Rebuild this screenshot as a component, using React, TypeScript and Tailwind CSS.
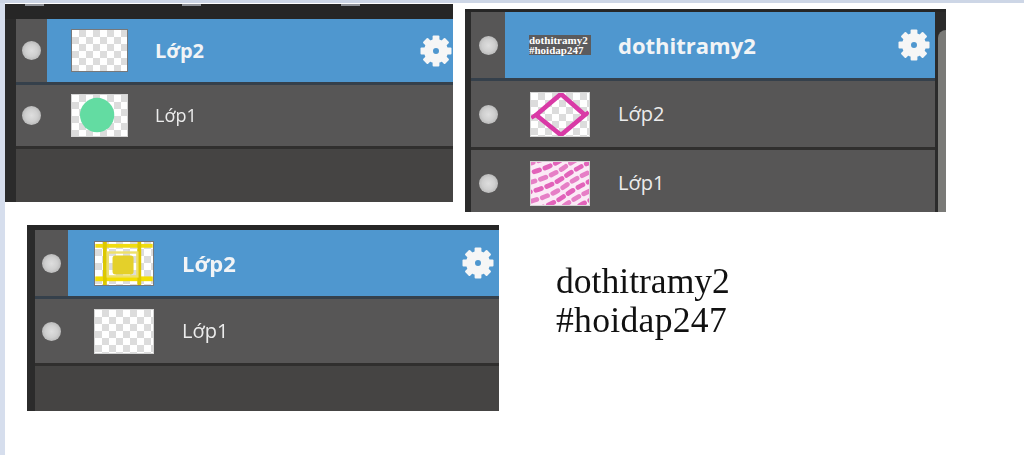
import React from "react";

// small checker used as the transparent layer preview
const checker =
  "bg-white bg-[linear-gradient(45deg,#dcdcdc_25%,transparent_25%,transparent_75%,#dcdcdc_75%),linear-gradient(45deg,#dcdcdc_25%,transparent_25%,transparent_75%,#dcdcdc_75%)] bg-[length:14px_14px] bg-[position:0_0,7px_7px]";

function Gear({ className }: { className: string }) {
  const teeth = [0, 45, 90, 135, 180, 225, 270, 315];
  return (
    <svg viewBox="0 0 32 32" className={className}>
      {teeth.map((a) => (
        <rect key={a} x="12.6" y="0.5" width="6.8" height="9" rx="1" fill="currentColor" transform={`rotate(${a} 16 16)`} />
      ))}
      <circle cx="16" cy="16" r="7.5" fill="none" stroke="currentColor" strokeWidth="9" />
    </svg>
  );
}

function Dot() {
  return (
    <div className="w-[19px] h-[19px] rounded-full bg-[radial-gradient(circle,#dedede_0%,#cfcfcf_45%,#a4a4a4_100%)]" />
  );
}

function Thumb({ size, dark, plain, children }: { size: string; dark?: boolean; plain?: boolean; children?: React.ReactNode }) {
  return (
    <div className={`${size} overflow-hidden border ${dark ? "border-[#77787a]" : "border-[#d4d4d4]"} ${plain ? "" : checker}`}>
      {children}
    </div>
  );
}

function Row({
  label,
  thumb,
  active,
  h,
  dotW,
  thumbX,
  labelX,
  labelSize,
  gearR,
}: {
  label: string;
  thumb: React.ReactNode;
  active?: boolean;
  h: string;
  dotW: string;
  thumbX: string;
  labelX: string;
  labelSize: string;
  gearR?: string;
}) {
  return (
    <div className={`flex items-stretch ${h} border-b-[3px] ${active ? "border-[#35404b]" : "border-[#302f2e]"} bg-[#575656]`}>
      <div className={`${dotW} shrink-0 flex items-center justify-center`}>
        <Dot />
      </div>
      <div className={`flex-1 min-w-0 flex items-center ${active ? "bg-[#4f97cf]" : ""}`}>
        <div className={`${thumbX} shrink-0`}>{thumb}</div>
        <span
          className={`${labelX} ${labelSize} font-['Open_Sans',sans-serif] whitespace-nowrap ${active ? "font-bold text-[#f2f4f6]" : "text-[#ececec]"}`}
        >
          {label}
        </span>
        {active && <Gear className={`ml-auto ${gearR} w-[32px] h-[32px] text-[#f6f6f6]`} />}
      </div>
    </div>
  );
}

function GreenCircle() {
  return (
    <svg viewBox="0 0 57 43" className="w-full h-full">
      <circle cx="26" cy="21" r="18" fill="#63dca2" />
    </svg>
  );
}

function Diamond() {
  return (
    <svg viewBox="0 0 60 45" className="w-full h-full">
      <path d="M5 23 L31 1 L56 23 L31 44 Z" fill="none" stroke="#d93aa6" strokeWidth="4.8" />
      <path d="M0 26 L5 23 M56 23 L60 20" stroke="#d93aa6" strokeWidth="4" />
    </svg>
  );
}

function PinkMottle() {
  const bands = [-12, -2, 8, 18, 28, 38, 48, 58];
  return (
    <svg viewBox="0 0 60 45" className="w-full h-full bg-[#fbeaf6]">
      {bands.map((y, i) => (
        <path
          key={y}
          d={`M-4 ${y + 14} Q20 ${y + 8} 34 ${y - 2} T66 ${y - 20}`}
          fill="none"
          stroke={i % 2 ? "#e263ba" : "#e67fc6"}
          strokeWidth="5"
          strokeLinecap="round"
          strokeDasharray="6 6"
          strokeDashoffset={i * 5}
        />
      ))}
    </svg>
  );
}

function TextThumb() {
  return (
    <div className="w-full h-full flex flex-col justify-center bg-[#5b5b5d] font-['Liberation_Serif',serif] font-bold text-[11px] leading-[10px] text-white whitespace-nowrap">
      <span>dothitramy2</span>
      <span>#hoidap247</span>
    </div>
  );
}

function YellowLines() {
  return (
    <svg viewBox="0 0 60 45" className="w-full h-full">
      <rect x="0" y="2" width="60" height="4" fill="#f0dc10" />
      <rect x="0" y="36" width="60" height="5" fill="#f3de00" />
      <rect x="8" y="0" width="4" height="45" fill="#dcc800" />
      <rect x="44" y="0" width="4" height="45" fill="#dcc800" />
      <rect x="13" y="11" width="31" height="25" fill="none" stroke="#eee06a" strokeWidth="2.5" />
      <rect x="18" y="14" width="22" height="20" rx="3" fill="#e4d02a" />
    </svg>
  );
}

export default function App() {
  return (
    <div className="w-[1024px] h-[455px] overflow-hidden bg-white">
      <div className="h-[3px] bg-[#cdd6e6]" />
      <div className="flex h-[452px]">
        <div className="w-[5px] h-full shrink-0 bg-[#d6deed]" />
        <div className="flex-1 min-w-0 pt-px blur-[0.4px]">
          <div className="flex items-start">
            {/* panel one */}
            <div className="relative w-[448px] h-[198px] bg-[#454443] flex flex-col">
              <div className="h-[15px] bg-[#262626] shrink-0" />
              <div className="flex-1 flex flex-col border-l-[11px] border-[#2b2b2b]">
                <Row h="h-[66px]" active dotW="w-[31px]" thumbX="ml-[24px]" labelX="ml-[27px]" labelSize="text-[20px]" gearR="mr-[1px]" label="Lớp2" thumb={<Thumb dark size="w-[57px] h-[43px]" />} />
                <Row h="h-[64px]" dotW="w-[31px]" thumbX="ml-[24px]" labelX="ml-[27px]" labelSize="text-[18px]" label="Lớp1" thumb={<Thumb size="w-[57px] h-[43px]"><GreenCircle /></Thumb>} />
              </div>
              <div className="absolute left-[20px] top-0 w-[19px] h-[2px] bg-[#8f9298]" />
              <div className="absolute left-[177px] top-0 w-[19px] h-[2px] bg-[#8f9298]" />
              <div className="absolute left-[336px] top-0 w-[19px] h-[2px] bg-[#8f9298]" />
            </div>
            {/* panel two */}
            <div className="ml-[12px] mt-[5px] w-[481px] h-[203px] bg-[#2b2b2b] flex flex-col">
              <div className="h-[3px] bg-[#262626] shrink-0" />
              <div className="flex flex-1 min-h-0">
                <div className="flex-1 min-w-0 flex flex-col border-l-[6px] border-[#2b2b2b]">
                  <Row h="h-[69px]" active dotW="w-[34px]" thumbX="ml-[24px]" labelX="ml-[27px]" labelSize="text-[22px]" gearR="mr-[5px]" label="dothitramy2" thumb={<div className="w-[62px] h-[20px]"><TextThumb /></div>} />
                  <Row h="h-[69px]" dotW="w-[34px]" thumbX="ml-[25px]" labelX="ml-[28px]" labelSize="text-[20px]" label="Lớp2" thumb={<Thumb size="w-[60px] h-[45px]"><Diamond /></Thumb>} />
                  <div className="flex-1 min-h-0 overflow-hidden">
                    <Row h="h-[69px]" dotW="w-[34px]" thumbX="ml-[25px]" labelX="ml-[28px]" labelSize="text-[20px]" label="Lớp1" thumb={<Thumb plain size="w-[60px] h-[45px]"><PinkMottle /></Thumb>} />
                  </div>
                </div>
                <div className="w-[11px] shrink-0 bg-[#2b2b2b] flex flex-col pl-[3px]">
                  <div className="mt-[18px] flex-1 rounded-tl-lg bg-[#7a7a77]" />
                </div>
              </div>
            </div>
          </div>
          {/* panel three and the caption */}
          <div className="mt-[13px] ml-[22px] flex items-start">
            <div className="w-[472px] h-[186px] bg-[#454443] flex flex-col">
              <div className="h-[5px] bg-[#262626] shrink-0" />
              <div className="flex-1 flex flex-col border-l-[8px] border-[#2b2b2b]">
                <Row h="h-[69px]" active dotW="w-[33px]" thumbX="ml-[26px]" labelX="ml-[28px]" labelSize="text-[22px]" gearR="mr-[5px]" label="Lớp2" thumb={<Thumb dark size="w-[60px] h-[45px]"><YellowLines /></Thumb>} />
                <Row h="h-[67px]" dotW="w-[33px]" thumbX="ml-[26px]" labelX="ml-[28px]" labelSize="text-[20px]" label="Lớp1" thumb={<Thumb size="w-[60px] h-[45px]" />} />
              </div>
            </div>
            <div className="ml-[57px] mt-[37px] font-['Liberation_Serif',serif] text-[35.6px] leading-[39px] text-[#111]">
              <div>dothitramy2</div>
              <div className="tracking-[0.3px]">#hoidap247</div>
            </div>
          </div>
        </div>
      </div>
    </div>
  );
}
